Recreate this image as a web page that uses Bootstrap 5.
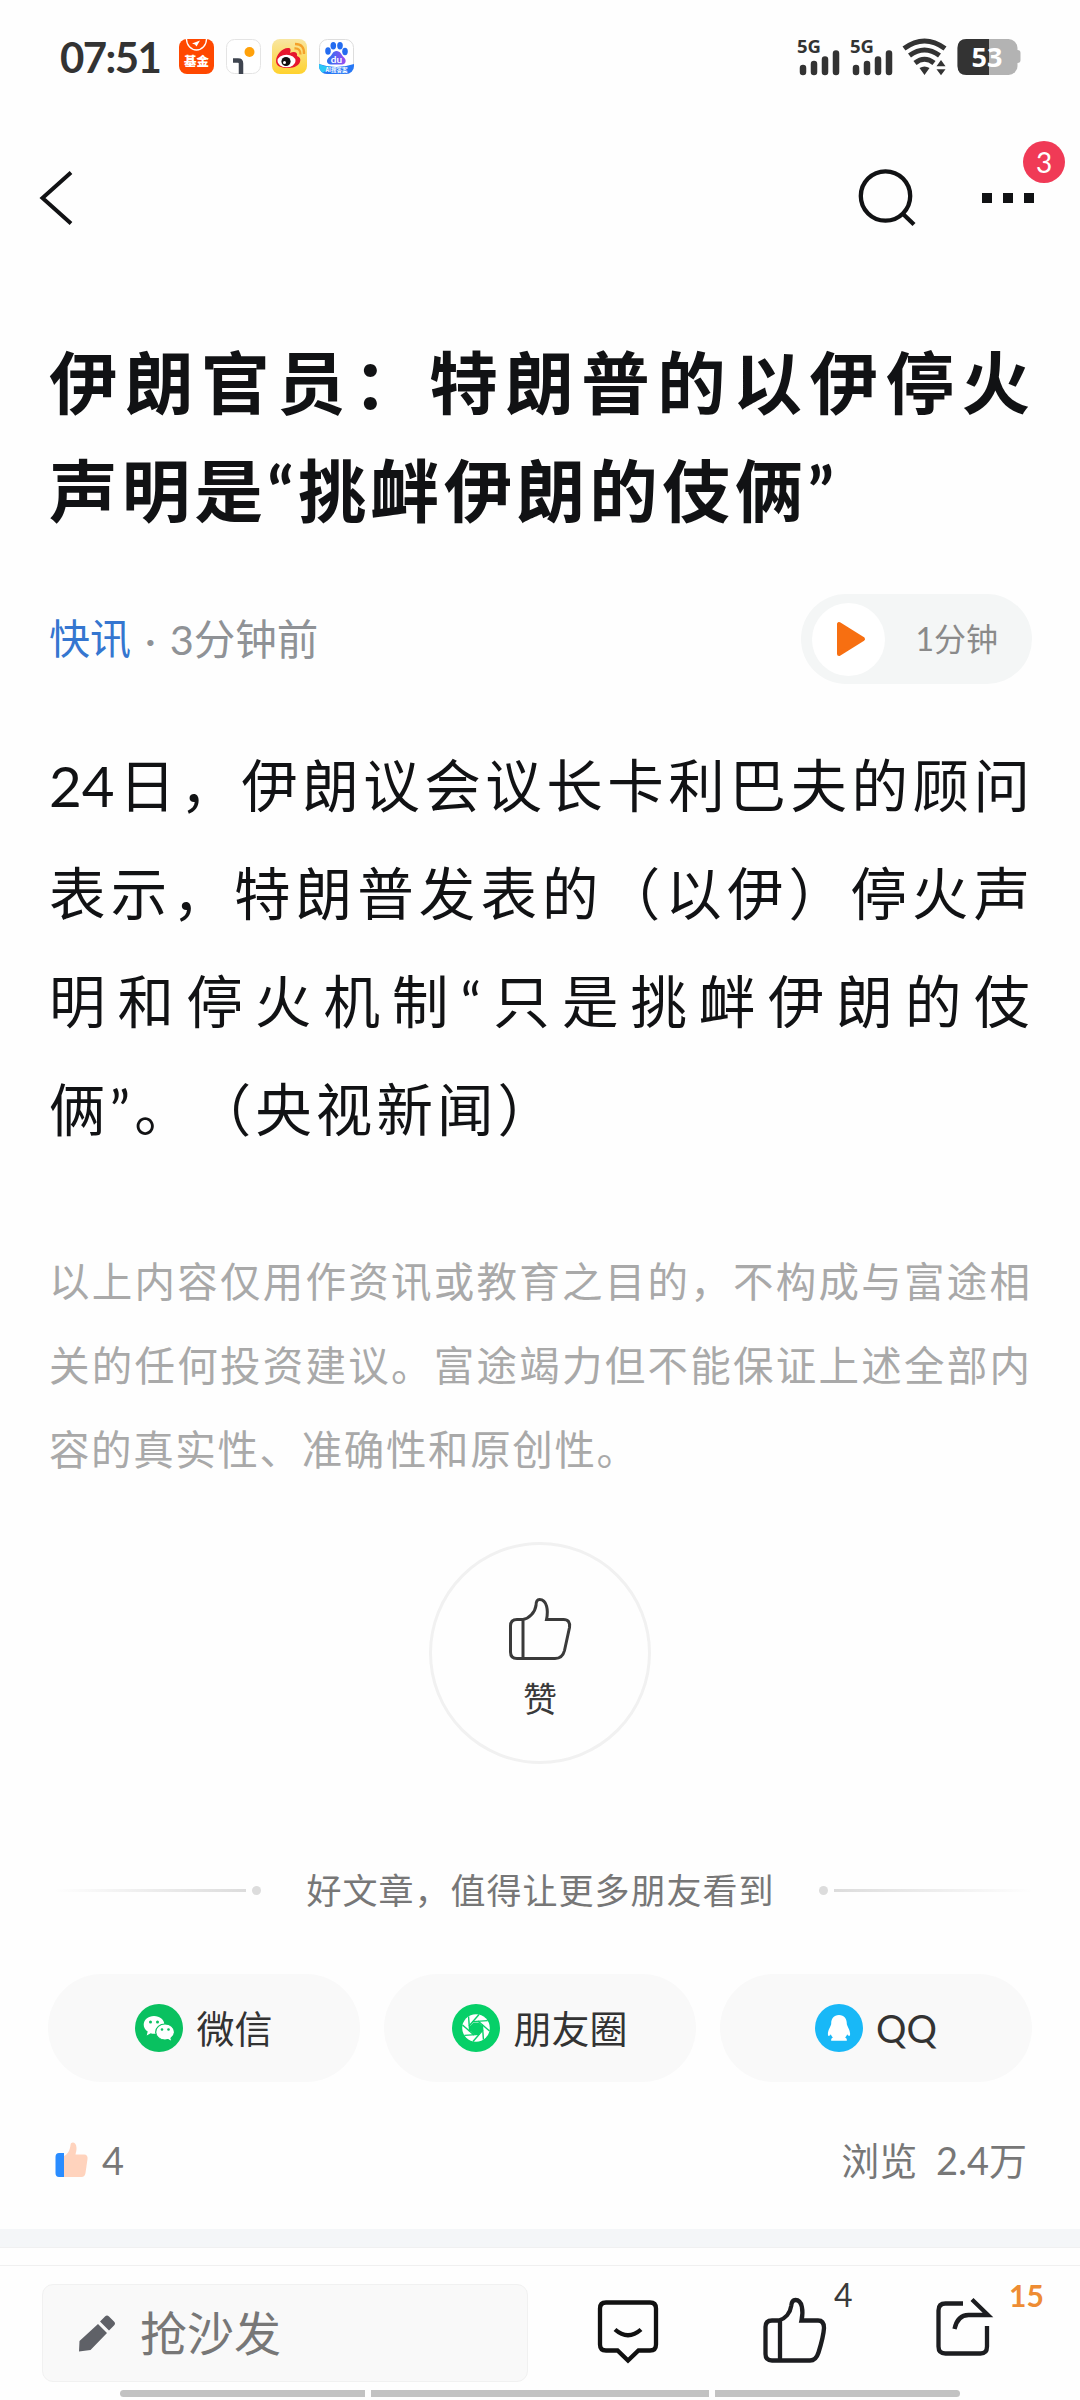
<!DOCTYPE html>
<html lang="zh-CN">
<head>
<meta charset="utf-8">
<meta name="viewport" content="width=device-width, initial-scale=1">
<title>伊朗官员：特朗普的以伊停火声明是“挑衅伊朗的伎俩”</title>
<link href="https://cdn.jsdelivr.net/npm/bootstrap@5.3.0/dist/css/bootstrap.min.css" rel="stylesheet">
<style>
body{font-family:Lato,"Noto Sans CJK SC",sans-serif;color:#111214;background:#fefefe;width:1080px;height:2400px;overflow:hidden;text-spacing-trim:space-all}
svg{display:block;flex:none;overflow:visible}
.status-bar{height:115px;padding:0 59px 0 60px;color:#333}
.clock{font-size:42px;font-weight:700;line-height:50px;width:119px;letter-spacing:-1.6px;margin-top:32px}
.tray{gap:11.7px;margin-top:39px}
.top-bar{height:214px;padding:53px 46px 0 39px}
.top-inner{height:60px}
.notice{top:-51px;left:41px;width:42px;height:42px;background:#f03a56;font-size:28px;line-height:42px;font-weight:400;padding:0}
.page-pad{padding-left:49px;padding-right:48px}
.ln{display:block;white-space:nowrap;text-align:justify;text-align-last:justify;width:981px}
.headline{font-size:68.5px;line-height:108px;font-weight:700;margin:0}
.meta-row{height:90px;margin-top:49px;font-size:41.5px;color:#8f9296}
.meta-row a{color:#3576d0;text-decoration:none;font-size:41px}
.listen{width:231px;height:90px;background:#f4f6f6;padding-left:11px;padding-right:34px;font-size:32px;color:#8a8a8a}
.disc{width:73px;height:73px;padding-left:5px}
.story{font-size:56.500px;line-height:108px;margin:47px 0 0}
.legal{font-size:40.500px;line-height:84px;color:#a9a9a9;margin:77px 0 0}
.praise{width:222px;height:222px;border:3px solid #f1f1f1;margin:50px 0 0 380px;color:#3a3a3a;font-size:34px;line-height:40px;padding-top:52px}
.praise span{margin-top:18px}
.invite{height:50px;margin-top:101px;font-size:35px;color:#777}
.fade-l,.fade-r{height:3px;width:192px;background:linear-gradient(90deg,#fefefe,#dcdcdc)}
.fade-r{background:linear-gradient(90deg,#dcdcdc,#fefefe);width:198px}
.pt{width:9px;height:9px;background:#dcdcdc}
.share-list{gap:24px;margin:59px 0 0 -1px}
.share-pill{height:108px;background:#f9f9f9;font-size:38px;color:#333;gap:13px;flex:1 1 0}
.count-row{height:50px;margin-top:53px;font-size:38px;color:#777}
.band{height:19px;background:#f4f6f8;border-bottom:1px solid #f0f0f1;margin-top:44px}
.action-bar{margin-top:17px;border-top:1px solid #f0f0f0;height:125px;padding:18px 41px 0 42px}
.reply{width:486px;height:98px;background:#f9f9f9;border:1px solid #f1f1f1;border-radius:11px;font-size:47px;color:#777;padding-left:36px}
.tally{font-size:32px;line-height:32px;top:-18px;color:#3a3a3a}
.home{height:7px;gap:6px;padding:0 120px}
.home div{background:#c2c2c2}
</style>
</head>
<body>
<header class="status-bar d-flex align-items-start">
  <div class="clock">07:51</div>
  <div class="tray d-flex">
    <svg width="35" height="35" viewBox="0 0 35 35"><rect width="35" height="35" rx="8" fill="#ff4800"/><path d="M7.500 0a10 11 0 0 0 20 0" fill="none" stroke="#fff" stroke-width="1.300"/><path d="M13 4.500l8-3-3.500 6-1.500-2z" fill="#fff"/><text x="17.500" y="27" text-anchor="middle" font-size="12.500" font-weight="900" fill="#fff" font-family="Noto Sans CJK SC">基金</text></svg>
    <svg width="35" height="35" viewBox="0 0 35 35"><rect x=".5" y=".5" width="34" height="34" rx="8" fill="#fff" stroke="#e4e4e4"/><path d="M7 21.500h5q3 0 3 3V35" fill="none" stroke="#3f4550" stroke-width="4.500"/><circle cx="23.500" cy="13" r="5" fill="#ffa10a"/></svg>
    <svg width="35" height="35" viewBox="0 0 35 35"><defs><linearGradient id="wb" x2="0" y2="1"><stop stop-color="#f8e6a2"/><stop offset="1" stop-color="#ffd22d"/></linearGradient></defs><rect width="35" height="35" rx="8" fill="url(#wb)"/><path d="M4 22c0-6 6-13 12-13 3 0 3 2 2 5 4-2 8-1 7 3 3 1 4 3 3 6-2 5-8 6-13 6C9 29 4 27 4 22z" fill="#e6162d"/><ellipse cx="14.500" cy="22" rx="9" ry="6.300" fill="#fff"/><circle cx="14" cy="22.500" r="4.600" fill="#111"/><circle cx="12.500" cy="23.500" r="1.500" fill="#fff"/><path d="M22.500 9.500q6-.5 6 6M23 5q9.500 0 9 10" fill="none" stroke="#f4a12a" stroke-width="2.300"/></svg>
    <svg width="35" height="35" viewBox="0 0 35 35"><defs><linearGradient id="bd"><stop stop-color="#2473f2"/><stop offset="1" stop-color="#9a4cf0"/></linearGradient><clipPath id="bc"><rect width="35" height="35" rx="8"/></clipPath></defs><rect x=".5" y=".5" width="34" height="34" rx="8" fill="#fff" stroke="#ddd"/><g fill="#246cf0"><ellipse cx="9" cy="12" rx="2.800" ry="3.700"/><ellipse cx="14.300" cy="6.700" rx="2.800" ry="3.700"/><ellipse cx="21" cy="6.700" rx="2.800" ry="3.700"/><ellipse cx="26" cy="12.500" rx="2.800" ry="3.700"/></g><path d="M17.500 12c4 0 5 4 7 6 4 3 2 8-2 7.500h-10C8 26 6 21 10.500 18c3-2 3-6 7-6z" fill="url(#bd)"/><text x="17.500" y="23.500" text-anchor="middle" font-size="10" font-weight="700" fill="#fff">du</text><g clip-path="url(#bc)"><path d="M0 25q17 6 35 0v10H0z" fill="#2778f5"/><path d="M0 25q6 3 12 3L2 35H0z" fill="#2bc8f5"/></g><text x="17.500" y="33.300" text-anchor="middle" font-size="5.500" font-weight="700" fill="#fff" font-family="Noto Sans CJK SC">AI搜答案</text></svg>
  </div>
  <svg class="ms-auto" style="margin-top:38px" width="224" height="38" viewBox="0 0 224 38">
    <g fill="#333" font-family="Noto Sans" font-weight="700" font-size="18.500"><text x="0" y="15.300">5G</text><text x="53" y="15.300">5G</text></g>
    <g stroke="#333" stroke-width="6.500" stroke-linecap="round"><path d="M6 30v4M17 26v8M28 21.500V34M39 15.500V34M59 30v4M70 26v8M81 21.500V34M92 15.500V34"/></g>
    <g fill="none" stroke="#333" stroke-width="5"><path d="M107 10.500q20.500-15 41 0"/><path d="M112.500 17.500q15-11 30 0"/><path d="M118 25q9.500-7.500 19 0"/></g>
    <path d="M122.500 30q5-3 10 0l-5 7zM139.500 28.300l4.500-6.300 4.500 6.300zM139.500 31.200l4.500 6 4.500-6z" fill="#333"/>
    <rect x="160.500" y="1" width="60" height="36" rx="9" fill="#b3b3b3"/><path d="M192 1h-22.500q-9 0-9 9v18q0 9 9 9H192z" fill="#333"/><path d="M219 12h1.500q3 0 3 3v7q0 3-3 3H219z" fill="#b3b3b3"/>
    <text x="190" y="28.500" text-anchor="middle" font-size="27" font-family="Noto Sans" font-weight="700" fill="#fff">53</text>
  </svg>
</header>

<nav class="top-bar">
  <div class="top-inner d-flex align-items-center justify-content-between">
    <svg width="34" height="56" viewBox="0 0 34 56"><path d="M32 2.500L3.500 28 32 53.500" fill="none" stroke="#111214" stroke-width="4"/></svg>
    <div class="d-flex align-items-center">
      <svg width="58" height="60" viewBox="0 0 58 60" style="margin-right:65px"><circle cx="26.500" cy="28" r="24.700" fill="none" stroke="#111214" stroke-width="4.300"/><path d="M43 45l12 11.500" stroke="#111214" stroke-width="4.300"/></svg>
      <div class="position-relative">
        <svg width="52" height="12" viewBox="0 0 52 12"><path d="M0 1h10v10H0zM21 1h10v10H21zM42 1h10v10H42z" fill="#111214"/></svg>
        <span class="notice badge rounded-circle position-absolute">3</span>
      </div>
    </div>
  </div>
</nav>

<main class="page-pad">
  <h1 class="headline"><span class="ln">伊朗官员：特朗普的以伊停火</span><span class="ln" style="width:785px">声明是“挑衅伊朗的伎俩”</span></h1>
  <div class="meta-row d-flex align-items-center">
    <a href="#">快讯</a><span style="margin:0 14px">·</span><span>3分钟前</span>
    <div class="listen rounded-pill d-flex align-items-center justify-content-between ms-auto">
      <div class="disc rounded-circle bg-white d-flex align-items-center justify-content-center"><svg width="30" height="36" viewBox="0 0 30 36"><path d="M3 3v30L27 18z" fill="#f76f11" stroke="#f76f11" stroke-width="4" stroke-linejoin="round"/></svg></div>
      <span>1分钟</span>
    </div>
  </div>
  <p class="story"><span class="ln">24日，伊朗议会议长卡利巴夫的顾问</span><span class="ln">表示，特朗普发表的（以伊）停火声</span><span class="ln">明和停火机制“只是挑衅伊朗的伎</span><span class="ln" style="width:505px">俩”。（央视新闻）</span></p>
  <p class="legal"><span class="ln">以上内容仅用作资讯或教育之目的，不构成与富途相</span><span class="ln">关的任何投资建议。富途竭力但不能保证上述全部内</span><span class="ln" style="width:588px">容的真实性、准确性和原创性。</span></p>

  <div class="praise rounded-circle d-flex flex-column align-items-center">
    <svg width="64" height="64" viewBox="0 0 64 64" fill="none" stroke="#3a3a3a" stroke-width="3"><path d="M15 22.500H9q-6.500 0-6.500 6.500v26q0 6.500 6.500 6.500h38q7.500 0 9.500-8l5-23q1-8-6-8H38.500c2-9 .5-20-7-20-3 0-3.500 3-3.500 6-1 7-7 13-13 14zM15 22.500v39"/></svg>
    <span>赞</span>
  </div>

  <div class="invite d-flex align-items-center">
    <div class="fade-l" style="margin-left:5px"></div><div class="pt rounded-circle" style="margin-left:6px"></div>
    <span class="ln mx-auto" style="width:467px">好文章，值得让更多朋友看到</span>
    <div class="pt rounded-circle"></div><div class="fade-r" style="margin-left:6px"></div>
  </div>

  <div class="share-list d-flex">
    <div class="share-pill rounded-pill d-flex align-items-center justify-content-center">
      <svg width="48" height="48" viewBox="0 0 48 48"><circle cx="24" cy="24" r="24" fill="#09c160"/><path d="M19 12c-5.800 0-10.300 3.900-10.300 8.700 0 2.800 1.500 5.200 4 6.800l-1 4 4-2.200q1.500.5 3.500.5c5.700 0 10.200-4 10.200-9S24.800 12 19 12z" fill="#fff"/><path d="M30 20c-5.300 0-9.300 3.600-9.300 8s4 8 9.300 8q1.700 0 3-.4l4 2.200-1-3.500c2-1.500 3.500-3.700 3.500-6.300 0-4.400-4.200-8-9.500-8z" fill="#fff" stroke="#09c160" stroke-width="1.200"/><g fill="#09c160"><circle cx="15.500" cy="18" r="1.500"/><circle cx="22.500" cy="18" r="1.500"/><circle cx="27" cy="25.500" r="1.300"/><circle cx="33.500" cy="25.500" r="1.300"/></g></svg><span>微信</span>
    </div>
    <div class="share-pill rounded-pill d-flex align-items-center justify-content-center">
      <svg width="48" height="48" viewBox="0 0 48 48"><circle cx="24" cy="24" r="24" fill="#06d068"/><circle cx="24" cy="24" r="13.800" fill="#fff"/><path d="M21.500 18.500h5.500l3.500 3.500v4.500L27 30h-5.500L18 26.500V22z" fill="#06d068"/><g stroke="#06d068" stroke-width="1.400"><path d="M17 22L27 10.500"/><path d="M17 22L27 10.500" transform="rotate(45 24 24)"/><path d="M17 22L27 10.500" transform="rotate(90 24 24)"/><path d="M17 22L27 10.500" transform="rotate(135 24 24)"/><path d="M17 22L27 10.500" transform="rotate(180 24 24)"/><path d="M17 22L27 10.500" transform="rotate(225 24 24)"/><path d="M17 22L27 10.500" transform="rotate(270 24 24)"/><path d="M17 22L27 10.500" transform="rotate(315 24 24)"/></g></svg><span>朋友圈</span>
    </div>
    <div class="share-pill rounded-pill d-flex align-items-center justify-content-center">
      <svg width="48" height="48" viewBox="0 0 48 48"><circle cx="24" cy="24" r="24" fill="#18b8f7"/><path d="M24 11c-5.500 0-8 4-7.800 9-.2 2-3.300 6-3.300 10 0 2.500 1.300 2.500 3 .2.300 1.500 1 2.300 2 3.300-1.500.8-1.900 1.500-1.700 3.200h15.600c.2-1.700-.2-2.400-1.700-3.200 1-1 1.700-1.800 2-3.300 1.700 2.300 3 2.300 3-.2 0-4-3.100-8-3.300-10 .2-5-2.300-9-7.800-9z" fill="#fff"/></svg><span>QQ</span>
    </div>
  </div>

  <div class="count-row d-flex align-items-center">
    <svg width="34" height="36" viewBox="0 0 34 36" style="margin-left:6px"><path d="M4 11h5v24H4q-3.500 0-3.500-4V15q0-4 3.500-4z" fill="#2a8cff"/><path d="M9 14c4-2 6-6 6.500-11 .5-4 6-3 6 3 0 3-.5 4-1 6.500H29q4 0 3.500 4.500l-2 14q-.7 4-4 4H9z" fill="#ffd3bd"/></svg>
    <span style="margin-left:13px">4</span><span class="ms-auto" style="word-spacing:9px;margin-right:5px">浏览 2.4万</span>
  </div>
</main>

<div class="band"></div>
<footer class="action-bar d-flex align-items-start">
  <div class="reply d-flex align-items-center">
    <svg width="37" height="38" viewBox="0 0 37 38"><path d="M19 10l9 9L11.500 36 0 37.500.5 27zM21 7.500L26 2.500q2-2 4 0l5 5q2 2 0 4l-5 5z" fill="#5f6167"/></svg>
    <span style="margin-left:24px">抢沙发</span>
  </div>
  <svg width="62" height="64" viewBox="0 0 62 64" style="margin:15px 0 0 69px" fill="none" stroke="#111" stroke-width="4.300"><path d="M9 3.500h44q6 0 6 6v36q0 6-6 6H41.500L31 61.500 20.500 51.500H9q-6 0-6-6v-36q0-6 6-6z"/><path d="M18 30.500q13 11.500 26 0"/></svg>
  <div class="position-relative" style="margin:13px 0 0 104px">
    <svg width="64" height="66" viewBox="0 0 64 66" fill="none" stroke="#1c1d20" stroke-width="4.300"><path d="M16 23.500H9q-6.500 0-6.500 6.500v27q0 6.500 6.500 6.500h38q6 0 8.500-8 5-16 5.500-24.500 0-7.500-6-7.500H38.500c2-9 1-20.500-6-20.500-3 0-4 2.500-4.300 6-1 7-6 12.500-12.200 14.500zM17 23.500v40"/></svg>
    <span class="tally position-absolute" style="left:71px">4</span>
  </div>
  <div class="position-relative" style="margin:13px 0 0 109px">
    <svg width="56" height="60" viewBox="0 0 56 60" fill="none" stroke="#1c1d20" stroke-width="4.300"><path d="M27 6.500H9.500q-7 0-7 7v36q0 7 7 7h35q6.500 0 6.500-7V29"/><path d="M18.500 32q3-14 14-14H52L36 2.500"/></svg>
    <span class="tally position-absolute fw-bold" style="left:73px;color:#ee8c33;font-size:30px">15</span>
  </div>
</footer>
<div class="home d-flex">
  <div class="rounded-start-pill" style="width:245px"></div><div style="width:338px"></div><div class="rounded-end-pill" style="width:245px"></div>
</div>
</body>
</html>
